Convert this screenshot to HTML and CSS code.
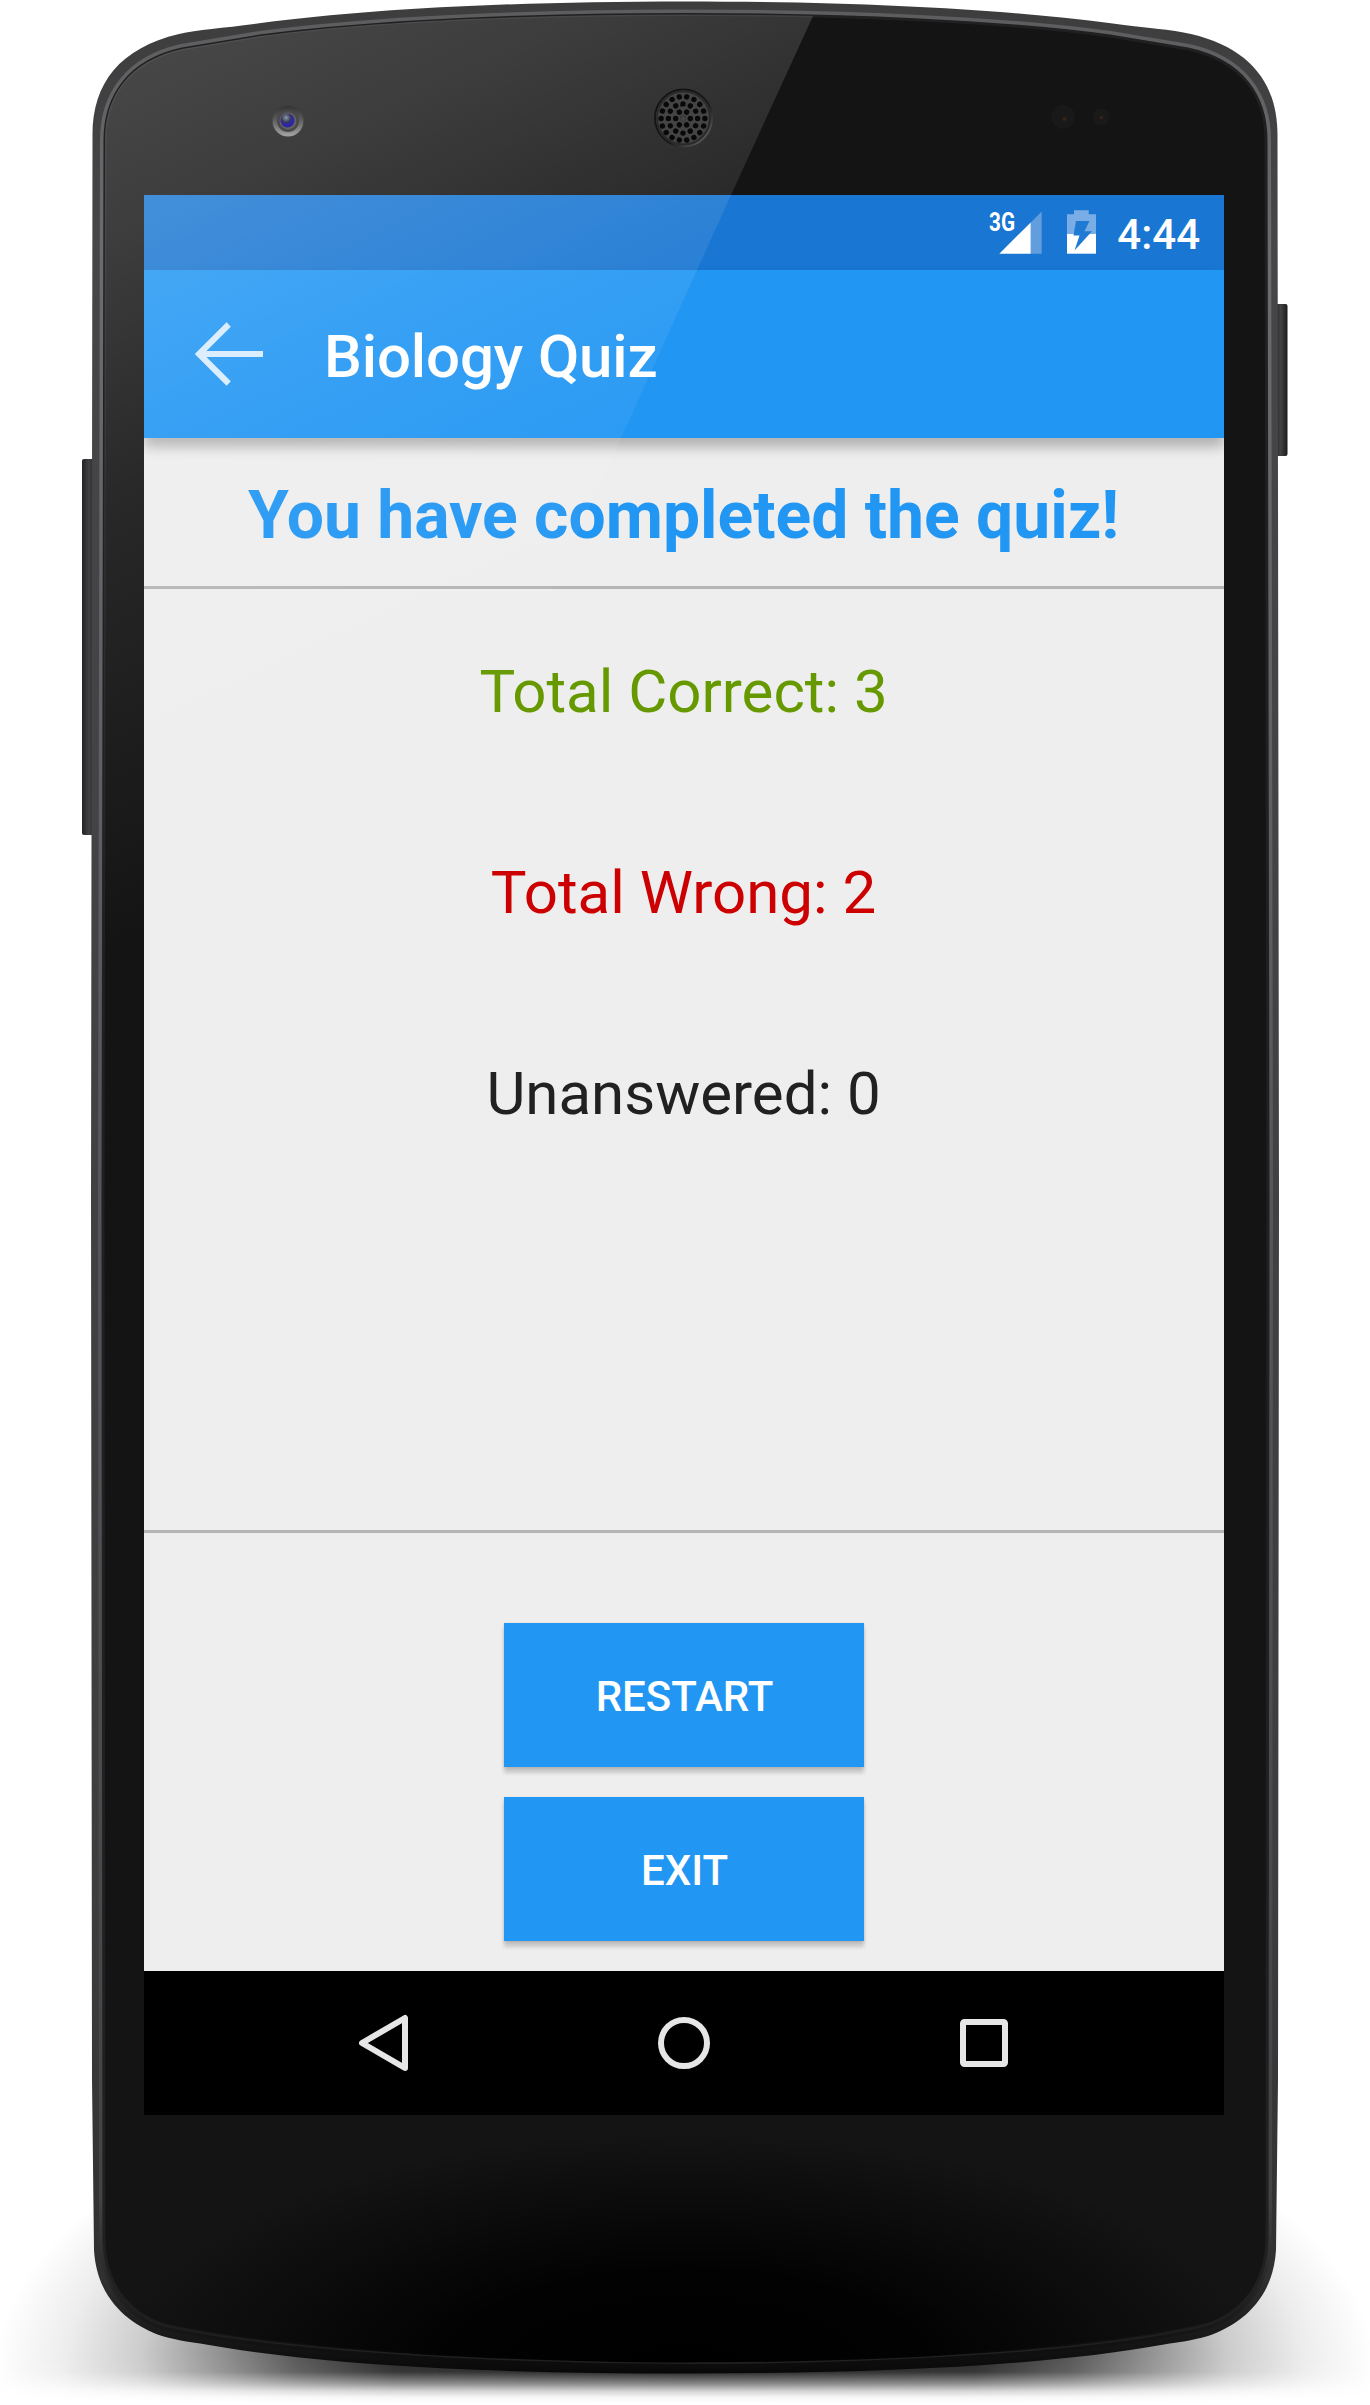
FILE: index.html
```html
<!DOCTYPE html>
<html lang="en">
<head>
<meta charset="utf-8">
<title>Biology Quiz</title>
<link rel="stylesheet" href="styles.css">
</head>
<body>
<div class="device">
  <svg class="device-frame" viewBox="0 0 1370 2405" aria-hidden="true">
    <defs>
      <path id="case" d="M685 1.5C860 1.500 1000 9 1109 23C1145 28 1172 29.500 1191 34C1250 48 1277.500 83 1277.500 135L1279 1200L1278 2080L1276 2250C1273 2300 1240 2325 1208 2336C1190 2341 1180 2342 1164 2344.500C1040 2367 860 2373.500 685 2373.500C510 2373.500 330 2367 206 2344.500C190 2342 180 2341 162 2336C130 2325 97 2300 94 2250L92 2080L91 1200L92.500 135C92.500 83 120 48 179 34C198 29.500 225 28 261 23C370 9 510 1.500 685 1.500Z"/>
      <path id="glass" d="M685 14.500C840 14.500 1000 21 1110 36L1188 49C1243 61 1266 97 1266 140L1268 1200L1267 2240C1266 2290 1235 2318 1201 2326C1080 2353 860 2362.500 685 2362.500C510 2362.500 280 2350 169 2326C135 2318 105 2290 104 2240L103 1200L105 140C105 97 128 61 182 49L260 36C370 21 530 14.500 685 14.500Z"/>
      <linearGradient id="rim" x1="0" y1="0" x2="0" y2="1">
        <stop offset="0" stop-color="#3d3d3e"/><stop offset=".1" stop-color="#464648"/>
        <stop offset=".8" stop-color="#3c3d3f"/><stop offset=".96" stop-color="#303030"/><stop offset=".985" stop-color="#181818"/><stop offset="1" stop-color="#080808"/>
      </linearGradient>
      <linearGradient id="rimLight" x1="0" y1="0" x2="0" y2="1">
        <stop offset="0" stop-color="#5d5d60"/><stop offset=".1" stop-color="#6c6c6f"/>
        <stop offset=".5" stop-color="#57575b"/><stop offset=".93" stop-color="#434345"/><stop offset="1" stop-color="#0c0c0c"/>
      </linearGradient>
      <radialGradient id="chin" gradientUnits="userSpaceOnUse" cx="0" cy="0" r="1" gradientTransform="translate(685 2370) scale(580 240)">
        <stop offset="0" stop-color="#000"/><stop offset=".42" stop-color="#000" stop-opacity=".9"/><stop offset="1" stop-color="#000" stop-opacity="0"/>
      </radialGradient>
      <radialGradient id="ground" gradientUnits="userSpaceOnUse" cx="0" cy="0" r="1" gradientTransform="translate(685 2372) scale(690 325)">
        <stop offset="0" stop-opacity=".9"/><stop offset=".42" stop-opacity=".84"/><stop offset=".56" stop-opacity=".66"/>
        <stop offset=".68" stop-opacity=".42"/><stop offset=".79" stop-opacity=".2"/><stop offset=".9" stop-opacity=".07"/><stop offset="1" stop-opacity="0"/>
      </radialGradient>
      <linearGradient id="groundFade" gradientUnits="userSpaceOnUse" x1="0" y1="2355" x2="0" y2="2403">
        <stop offset="0" stop-color="#fff"/><stop offset=".35" stop-color="#eee"/><stop offset=".6" stop-color="#848484"/>
        <stop offset=".75" stop-color="#333"/><stop offset=".88" stop-color="#0a0a0a"/><stop offset="1" stop-color="#000"/>
      </linearGradient>
      <mask id="groundMask" maskUnits="userSpaceOnUse" x="0" y="2000" width="1370" height="405"><rect y="2000" width="1370" height="405" fill="url(#groundFade)"/></mask>
      <linearGradient id="key" x1="0" y1="0" x2="1" y2="0">
        <stop offset="0" stop-color="#232325"/><stop offset=".5" stop-color="#424244"/><stop offset="1" stop-color="#1b1b1c"/>
      </linearGradient>
    </defs>
    <rect y="2000" width="1370" height="405" fill="url(#ground)" mask="url(#groundMask)"/>
    <rect x="82" y="459" width="14" height="376" rx="2" fill="url(#key)"/>
    <rect x="1274" y="304" width="13.500" height="152" rx="2" fill="url(#key)"/>
    <use href="#case" fill="url(#rim)"/>
    <use href="#glass" fill="none" stroke="url(#rimLight)" stroke-width="10"/>
    <use href="#glass" fill="#141414" stroke="#202021" stroke-width="3"/>
    <use href="#glass" fill="url(#chin)"/>
  </svg>

  <main class="screen">
    <header class="status-bar">
      <svg class="status-icons" viewBox="988 208 112 50" role="img" aria-label="3G signal, battery charging">
        <text class="network" x="989" y="230.500" textLength="26" lengthAdjust="spacingAndGlyphs">3G</text>
        <path d="M1030.700 222.500L1041.700 211.500V253.700H1030.700Z" fill="#629ede"/>
        <path d="M999.300 253.700L1030.700 222.500V253.700Z" fill="#fff"/>
        <path d="M1067 214.300H1074V210.200H1088.700V214.300H1096V234H1067Z" fill="#7aade5"/>
        <path d="M1067 234H1096V253.700H1067Z" fill="#fff"/>
        <path d="M1076 221H1089.500L1084.500 231.300H1092L1074.500 250.500L1079.500 235.500H1073.500Z" fill="#1f7ad4"/>
      </svg>
      <span class="clock">4:44</span>
    </header>
    <nav class="toolbar">
      <svg class="back-icon" viewBox="192 318 74 72" role="img" aria-label="Back"><path d="M228.700 324.500L199 354L228.700 383.500M199 354H263" fill="none" stroke="#fff" stroke-opacity=".82" stroke-width="6"/></svg>
      <h1 class="toolbar-title">Biology Quiz</h1>
    </nav>
    <h2 class="headline">You have completed the quiz!</h2>
    <section class="results">
      <p class="result result-correct">Total Correct: 3</p>
      <p class="result result-wrong">Total Wrong: 2</p>
      <p class="result">Unanswered: 0</p>
    </section>
    <section class="actions">
      <button class="action">RESTART</button>
      <button class="action">EXIT</button>
    </section>
    <footer class="nav-bar">
      <svg class="nav-icon" viewBox="348 2007 72 72" aria-hidden="true"><path d="M405 2018V2068L362 2043Z"/></svg>
      <svg class="nav-icon" viewBox="648 2007 72 72" aria-hidden="true"><circle cx="684" cy="2043" r="23"/></svg>
      <svg class="nav-icon" viewBox="948 2007 72 72" aria-hidden="true"><rect x="963" y="2022" width="42" height="42" rx="1.500"/></svg>
    </footer>
  </main>

  <svg class="device-gloss" viewBox="0 0 1370 2405" aria-hidden="true">
    <defs>
      <linearGradient id="gloss" gradientUnits="userSpaceOnUse" x1="42" y1="90" x2="386" y2="828">
        <stop offset="0" stop-color="#fff" stop-opacity=".22"/><stop offset=".2" stop-color="#fff" stop-opacity=".175"/>
        <stop offset=".5" stop-color="#fff" stop-opacity=".085"/><stop offset="1" stop-color="#fff" stop-opacity="0"/>
      </linearGradient>
      <clipPath id="glassClip"><use href="#glass"/></clipPath>
      <linearGradient id="lens" x1="0" y1="0" x2="0" y2="1"><stop offset="0" stop-color="#333"/><stop offset=".4" stop-color="#555"/><stop offset="1" stop-color="#a5a5a5"/></linearGradient>
      <radialGradient id="iris" cx=".4" cy=".3" r=".75"><stop offset="0" stop-color="#8d9c9f"/><stop offset=".45" stop-color="#36365e"/><stop offset=".75" stop-color="#2b22bd"/><stop offset="1" stop-color="#302c66"/></radialGradient>
      <linearGradient id="speakerRing" x1="0" y1="0" x2="1" y2="1"><stop offset="0" stop-color="#111"/><stop offset=".6" stop-color="#171717"/><stop offset="1" stop-color="#777"/></linearGradient>
    </defs>
    <path d="M0 0H820L813 16L731 195L621 438L300 1144H0Z" fill="url(#gloss)" clip-path="url(#glassClip)"/>
    <circle cx="288" cy="121" r="15.500" fill="url(#lens)"/>
    <circle cx="288" cy="121" r="11" fill="#49484a"/>
    <circle cx="288" cy="121" r="8.500" fill="#686460"/>
    <circle cx="287.500" cy="120.500" r="7" fill="url(#iris)"/>
    <circle cx="683.500" cy="118" r="28.500" fill="#444" stroke="url(#speakerRing)" stroke-width="2"/>
    <circle cx="683.500" cy="118" r="26.500" fill="none" stroke="#2a2a2a" stroke-width="2"/>
    <g fill="none" stroke="#080808" stroke-width="5.400" stroke-linecap="round">
      <circle cx="683" cy="118.500" r=".1"/>
      <circle cx="683" cy="118.500" r="7.300" pathLength="60" stroke-dasharray=".01 9.990"/>
      <circle cx="683" cy="118.500" r="14.600" pathLength="120" stroke-dasharray=".01 9.990"/>
      <circle cx="683" cy="118.500" r="21.900" pathLength="180" stroke-dasharray=".01 9.990"/>
    </g>
    <circle cx="1063" cy="117" r="12" fill="#1a1919"/><circle cx="1064.500" cy="119" r="2" fill="#38231a"/>
    <circle cx="1101" cy="117" r="8.500" fill="#1a1919"/><circle cx="1101.500" cy="117.500" r="1.800" fill="#38231a"/>
  </svg>
</div>
</body>
</html>
```
FILE: styles.css
```css
* { box-sizing: border-box; margin: 0; padding: 0; }

body {
  background: #fff;
  font-family: Roboto, "Liberation Sans", sans-serif;
}

.device {
  position: relative;
  width: 1370px;
  height: 2405px;
  padding: 195px 146px 290px 144px;
  overflow: hidden;
}

.device-frame,
.device-gloss {
  position: absolute;
  inset: 0;
  width: 1370px;
  height: 2405px;
}

.device-gloss { z-index: 3; pointer-events: none; }

.screen {
  position: relative;
  z-index: 2;
  display: flex;
  flex-direction: column;
  height: 1920px;
  background: #eee;
  overflow: hidden;
}

.status-bar {
  display: flex;
  flex: 0 0 75px;
  align-items: center;
  justify-content: flex-end;
  gap: 17px;
  padding-right: 24px;
  background: #1976d2;
}

.status-icons { width: 112px; height: 50px; }

.network {
  fill: #fff;
  font-size: 25px;
  font-weight: 700;
}

.clock {
  padding-top: 4px;
  color: #fff;
  font-size: 42px;
  font-weight: 500;
}

.toolbar {
  display: flex;
  flex: 0 0 168px;
  align-items: center;
  gap: 58px;
  padding-left: 48px;
  background: #2196f3;
  box-shadow: 0 9px 12px rgba(0, 0, 0, .26);
}

.back-icon { width: 74px; height: 72px; }

.toolbar-title {
  padding-top: 4px;
  color: #fff;
  font-size: 60px;
  font-weight: 500;
  letter-spacing: -.12px;
}

.headline {
  flex: 0 0 151px;
  padding: 8px 1px 0 0;
  border-bottom: 3px solid #b5b5b5;
  color: #2196f3;
  font-size: 66px;
  font-weight: 700;
  line-height: 140px;
  text-align: center;
}

.results {
  flex: 0 0 944px;
  padding: 2px 1px 0 0;
  border-bottom: 3px solid #b5b5b5;
}

.result {
  color: #212121;
  font-size: 60px;
  line-height: 201px;
  text-align: center;
}

.result-correct { color: #690; }
.result-wrong { color: #c00; }

.actions {
  display: flex;
  flex: 1;
  flex-direction: column;
  align-items: center;
  justify-content: flex-end;
  gap: 30px;
  padding-bottom: 30px;
}

.action {
  width: 360px;
  height: 144px;
  padding: 3px 0 0 1px;
  border: 0;
  background: #2196f3;
  box-shadow: 0 6px 4px rgba(0, 0, 0, .16), 0 1px 3px rgba(0, 0, 0, .14);
  color: #fff;
  font: 500 42px Roboto, "Liberation Sans", sans-serif;
}

.nav-bar {
  display: flex;
  flex: 0 0 144px;
  align-items: center;
  justify-content: center;
  gap: 228px;
  background: #000;
}

.nav-icon {
  width: 72px;
  height: 72px;
  fill: none;
  stroke: #e6e6e6;
  stroke-width: 6;
  stroke-linejoin: round;
}
```
